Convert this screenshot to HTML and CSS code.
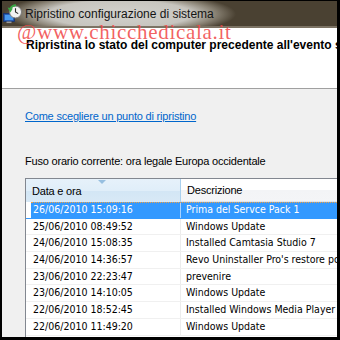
FILE: index.html
```html
<!DOCTYPE html>
<html>
<head>
<meta charset="utf-8">
<link rel="stylesheet" href="styles.css">
</head>
<body>
<div class="frame">
  <div class="window">
    <div class="titlebar">
      <svg class="appicon" width="20" height="20" viewBox="0 0 20 20">
        <rect x="0.5" y="9.5" width="11" height="8" fill="#1f4fa8" stroke="#17346e" stroke-width="0.8"/>
        <rect x="1.8" y="10.8" width="8.4" height="5.4" fill="#4a9aee"/>
        <rect x="3.5" y="17.5" width="5" height="1.6" fill="#9a9a9a"/>
        <circle cx="12.5" cy="8" r="6" fill="#f2f2f2" stroke="#7c7c7c" stroke-width="1"/>
        <path d="M12.5 4.2 V8 L15.2 9.6" stroke="#2b2b2b" stroke-width="1.1" fill="none"/>
        <path d="M7.2 5.2 A6.2 6.2 0 0 1 13 1.3" stroke="#39a845" stroke-width="2" fill="none"/>
        <path d="M4.6 3.6 L7.4 8.4 L9.8 4.4 Z" fill="#39a845"/>
      </svg>
      <span class="title">Ripristino configurazione di sistema</span>
    </div>
    <div class="header">
      <h1 class="heading">Ripristina lo stato del computer precedente all'evento selezionato</h1>
    </div>
    <div class="content">
      <a class="link" href="#">Come scegliere un punto di ripristino</a>
      <p class="tz">Fuso orario corrente: ora legale Europa occidentale</p>
      <div class="list">
        <div class="list-head">
          <div class="hcell hcell-sorted">Data e ora<span class="sort-arrow"></span></div>
          <div class="hcell hcell-rest">Descrizione</div>
        </div>
        <div class="row selected"><div class="c1">26/06/2010 15:09:16</div><div class="c2">Prima del Servce Pack 1</div></div>
        <div class="row"><div class="c1">25/06/2010 08:49:52</div><div class="c2">Windows Update</div></div>
        <div class="row"><div class="c1">24/06/2010 15:08:35</div><div class="c2">Installed Camtasia Studio 7</div></div>
        <div class="row"><div class="c1">24/06/2010 14:36:57</div><div class="c2">Revo Uninstaller Pro's restore point</div></div>
        <div class="row"><div class="c1">23/06/2010 22:23:47</div><div class="c2">prevenire</div></div>
        <div class="row"><div class="c1">23/06/2010 14:10:05</div><div class="c2">Windows Update</div></div>
        <div class="row"><div class="c1">22/06/2010 18:52:45</div><div class="c2">Installed Windows Media Player</div></div>
        <div class="row"><div class="c1">22/06/2010 11:49:20</div><div class="c2">Windows Update</div></div>
      </div>
    </div>
    <span class="watermark">@www.chicchedicala.it</span>
  </div>
</div>
</body>
</html>
```
FILE: styles.css
```css
html, body {
  margin: 0;
  padding: 0;
  background: #000;
}

.frame {
  width: 340px;
  height: 340px;
  box-sizing: border-box;
  padding: 1px 3px 3px 2px;
  overflow: hidden;
}

.window {
  position: relative;
  height: 100%;
  display: flex;
  flex-direction: column;
  overflow: hidden;
  background: #f0f0f0;
  font-family: "Liberation Sans", Arial, sans-serif;
  color: #000;
}

.titlebar {
  flex: none;
  height: 25px;
  display: flex;
  align-items: center;
  gap: 2px;
  padding-left: 1px;
  background: radial-gradient(ellipse 116px 22px at 118px 13px, #d3d2cd 0%, #c7c5bf 62%, #8a8375 82%, #4a4132 100%);
  border-bottom: 2px solid #7c7364;
}

.appicon {
  flex: none;
  display: block;
}

.title {
  font-size: 12px;
  color: #141414;
  white-space: nowrap;
}

.header {
  flex: none;
  height: 60px;
  background: #fff;
  border-bottom: 1px solid #a0a0a0;
  overflow: hidden;
}

.heading {
  margin: 0;
  padding: 10px 0 0 24px;
  font-size: 12px;
  line-height: 14px;
  font-weight: bold;
  white-space: nowrap;
}

.watermark {
  position: absolute;
  left: 15px;
  top: 21px;
  font-family: "Liberation Serif", "Times New Roman", serif;
  font-size: 21px;
  line-height: 21px;
  letter-spacing: 0.7px;
  color: rgba(240, 70, 70, 0.85);
  white-space: nowrap;
  pointer-events: none;
}

.content {
  flex: 1;
  display: flex;
  flex-direction: column;
  padding-left: 23px;
  min-height: 0;
}

.link {
  display: block;
  margin-top: 20px;
  font-size: 11px;
  line-height: 14px;
  letter-spacing: -0.2px;
  color: #0066cc;
  text-decoration: underline;
  white-space: nowrap;
}

.tz {
  margin: 31px 0 10px;
  font-size: 11px;
  line-height: 14px;
  letter-spacing: -0.2px;
  white-space: nowrap;
}

.list {
  flex: 1;
  background: #fff;
  border-left: 1px solid #828790;
  border-top: 1px solid #828790;
  font-family: "DejaVu Sans Condensed", "DejaVu Sans", sans-serif;
  font-size: 10.5px;
  overflow: hidden;
}

.list-head {
  display: flex;
  height: 23px;
}

.hcell {
  position: relative;
  box-sizing: border-box;
  display: flex;
  align-items: center;
  padding-left: 6px;
  font-family: "Liberation Sans", Arial, sans-serif;
  font-size: 11px;
  letter-spacing: -0.2px;
  white-space: nowrap;
}

.hcell-sorted {
  flex: none;
  width: 155px;
  background: linear-gradient(#e6f1fa 0%, #e0eef9 50%, #d3e6f5 51%, #d8e9f6 100%);
  border-right: 1px solid #a9d0ee;
}

.hcell-rest {
  flex: 1;
  background: linear-gradient(#ffffff 0%, #ffffff 50%, #f3f4f6 51%, #f4f5f7 100%);
  border-bottom: 1px solid #e3e4e6;
}

.sort-arrow {
  position: absolute;
  left: 72px;
  top: 1px;
  width: 0;
  height: 0;
  border-left: 4px solid transparent;
  border-right: 4px solid transparent;
  border-top: 4px solid #97bfe0;
}

.row {
  position: relative;
  display: flex;
  height: 16.7px;
  box-sizing: border-box;
  border-bottom: 1px solid #f0f0f0;
  white-space: nowrap;
  line-height: 15.7px;
}

.row .c1 {
  flex: none;
  width: 155px;
  box-sizing: border-box;
  padding-left: 7px;
  border-right: 1px solid #ececec;
}

.row .c2 {
  flex: 1;
  padding-left: 5px;
  overflow: hidden;
}

.row.selected {
  background: linear-gradient(90deg, #fff 5px, #3399ff 5px);
  color: #fff;
  border-bottom-color: #3399ff;
}

.row.selected .c1 {
  border-right-color: #a8d2ff;
}

.row.selected::before {
  content: "";
  position: absolute;
  left: 5px;
  right: 0;
  top: 0;
  border-top: 1px dotted #f2a143;
}
```
